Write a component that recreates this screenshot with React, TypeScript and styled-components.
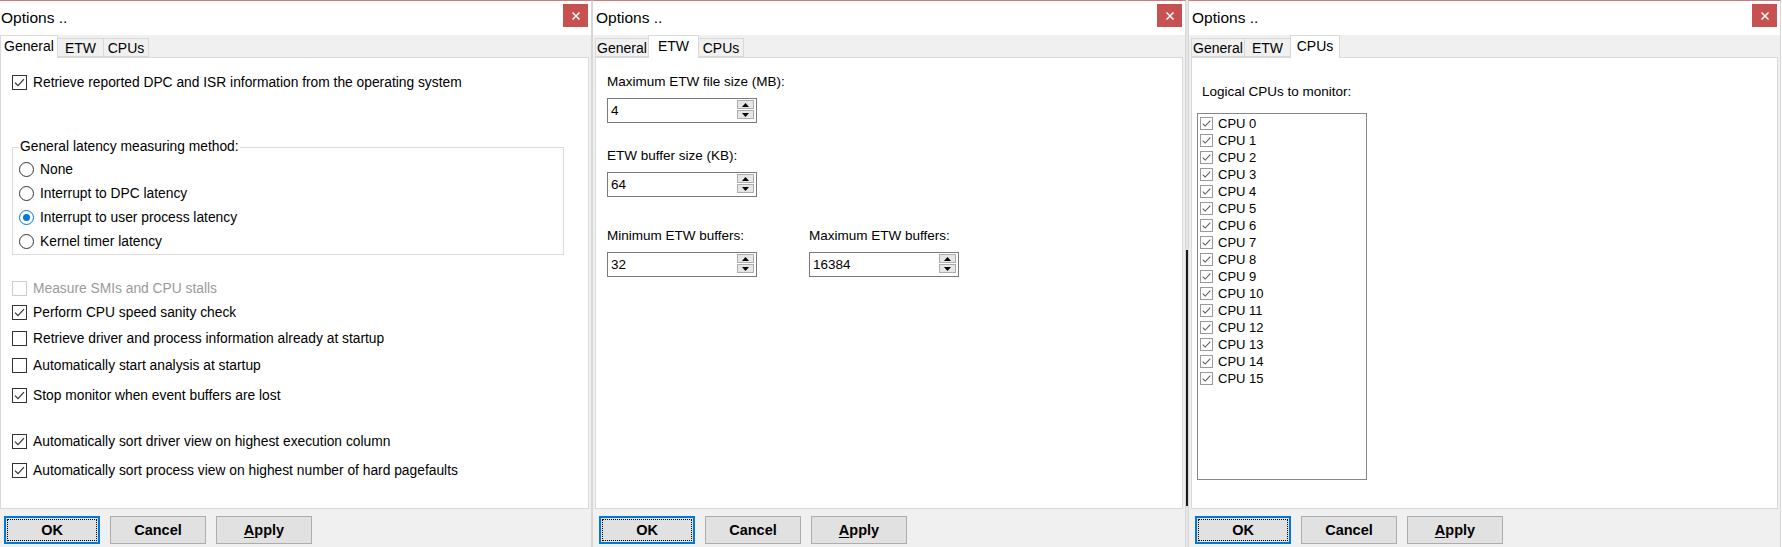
import React from 'react';
import styled, { createGlobalStyle } from 'styled-components';

const GlobalStyle = createGlobalStyle`
  html, body {
    margin: 0;
    padding: 0;
    background: #ffffff;
    overflow: hidden;
  }
  body {
    font-family: "Liberation Sans", Arial, sans-serif;
    font-size: 13.5px;
    color: #000000;
  }
  * {
    box-sizing: border-box;
  }
`;

// Layout
const Desktop = styled.div`
  display: flex;
  width: 1782px;
  height: 547px;
  overflow: hidden;
`;

const Window = styled.div<{ $shift?: number; $width?: number }>`
  flex: 0 0 ${({ $width }) => $width ?? 595}px;
  height: 547px;
  margin-left: ${({ $shift }) => $shift ?? 0}px;
  display: flex;
  flex-direction: column;
  background: #f0f0f0;
  border-top: 1px solid #cf7b7b;
  border-left: 1px solid #d6d6d6;
  border-right: 1px solid #d6d6d6;
`;

// dark edge of a window sitting behind the dialogs
const Seam = styled.div`
  flex: 0 0 2px;
  height: 547px;
  background: linear-gradient(
    to bottom,
    #e6e6e6 0,
    #e6e6e6 250px,
    #1c1c1c 250px,
    #1c1c1c 506px,
    #e6e6e6 506px
  );
`;

const TitleBar = styled.div`
  height: 34px;
  flex: 0 0 34px;
  background: #ffffff;
  display: flex;
  align-items: flex-start;
  justify-content: space-between;
  padding-left: 3px;
`;

const Title = styled.div`
  font-size: 15.5px;
  line-height: 34px;
`;

const CloseButton = styled.div`
  width: 25px;
  height: 23px;
  margin-top: 3px;
  margin-right: 3px;
  background: #c75050;
  display: flex;
  align-items: center;
  justify-content: center;
`;

const TabStrip = styled.div`
  height: 22px;
  flex: 0 0 22px;
  display: flex;
  align-items: flex-end;
  padding-left: 2px;
`;

const Tab = styled.div<{ $active?: boolean; $w: number }>`
  position: relative;
  z-index: ${({ $active }) => ($active ? 1 : 0)};
  width: ${({ $w, $active }) => $w + ($active ? 4 : 0)}px;
  height: ${({ $active }) => ($active ? 23 : 19)}px;
  margin-bottom: ${({ $active }) => ($active ? -1 : 0)}px;
  background: ${({ $active }) => ($active ? '#ffffff' : '#f0f0f0')};
  border: 1px solid #d9d9d9;
  border-bottom: ${({ $active }) => ($active ? 'none' : '1px solid #d9d9d9')};
  display: flex;
  align-items: center;
  justify-content: center;
  padding-bottom: ${({ $active }) => ($active ? 3 : 0)}px;
  font-size: 14px;

  & + & {
    margin-left: -1px;
  }
`;

const Panel = styled.div<{ $pad: string; $size?: number }>`
  flex: 1;
  margin: 0 2px;
  background: #ffffff;
  border: 1px solid #d9d9d9;
  padding: ${({ $pad }) => $pad};
  font-size: ${({ $size }) => $size ?? 13.5}px;
  display: flex;
  flex-direction: column;
  align-items: flex-start;
`;

const ButtonBar = styled.div`
  height: 38px;
  flex: 0 0 38px;
  display: flex;
  gap: 10px;
  padding: 7px 0 0 6px;
`;

const PushButton = styled.div<{ $default?: boolean }>`
  width: 96px;
  height: 28px;
  background: #e1e1e1;
  border: 1px solid ${({ $default }) => ($default ? '#0078d7' : '#adadad')};
  box-shadow: ${({ $default }) => ($default ? 'inset 0 0 0 1px #0078d7' : 'none')};
  outline: ${({ $default }) => ($default ? '1px dotted #000000' : 'none')};
  outline-offset: -4px;
  display: flex;
  align-items: center;
  justify-content: center;
  font-weight: 700;
  font-size: 14.5px;

  u {
    text-decoration-thickness: 1px;
    text-underline-offset: 2px;
  }
`;

// Check boxes and radio buttons
const CheckBox = styled.span<{ $size: number; $tone: 'normal' | 'disabled' | 'list' }>`
  flex: 0 0 auto;
  width: ${({ $size }) => $size}px;
  height: ${({ $size }) => $size}px;
  background: #ffffff;
  border: 1px solid
    ${({ $tone }) => ($tone === 'disabled' ? '#cccccc' : $tone === 'list' ? '#9a9a9a' : '#333333')};
  display: flex;
  align-items: center;
  justify-content: center;
`;

const RadioDot = styled.span<{ $on: boolean }>`
  flex: 0 0 auto;
  width: 15px;
  height: 15px;
  border-radius: 50%;
  background: #ffffff;
  border: 1px solid ${({ $on }) => ($on ? '#0078d7' : '#333333')};
  display: flex;
  align-items: center;
  justify-content: center;

  &::after {
    content: '';
    width: 7px;
    height: 7px;
    border-radius: 50%;
    background: ${({ $on }) => ($on ? '#0078d7' : 'transparent')};
  }
`;

const OptionRow = styled.div<{ $gap?: number; $disabled?: boolean }>`
  height: 24px;
  margin-top: ${({ $gap }) => $gap ?? 0}px;
  display: flex;
  align-items: center;
  gap: 6px;
  color: ${({ $disabled }) => ($disabled ? '#9b9b9b' : '#000000')};
  white-space: nowrap;
`;

const GroupBox = styled.fieldset`
  width: 552px;
  margin: 45px 0 0 0;
  padding: 2px 0 1px 6px;
  border: 1px solid #dcdcdc;

  legend {
    padding: 0 1px;
    line-height: 16px;
  }
`;

// ETW page
const FieldStack = styled.div`
  display: flex;
  flex-direction: column;
`;

const FieldLine = styled.div<{ $gap: number }>`
  display: flex;
  gap: 52px;
  margin-top: ${({ $gap }) => $gap}px;
`;

const FieldLabel = styled.div`
  line-height: 16px;
  margin-bottom: 8px;
  white-space: nowrap;
`;

const SpinBox = styled.div`
  width: 150px;
  height: 25px;
  border: 1px solid #7a7a7a;
  background: #ffffff;
  display: flex;
  align-items: flex-start;
  justify-content: space-between;
  padding: 0 2px 0 3px;
`;

const SpinValue = styled.span`
  line-height: 23px;
`;

const SpinArrows = styled.div`
  display: flex;
  flex-direction: column;
  gap: 1px;
  padding-top: 1px;
`;

const SpinArrow = styled.div`
  width: 17px;
  height: 9px;
  background: #e6e6e6;
  border: 1px solid #adadad;
  display: flex;
  align-items: center;
  justify-content: center;
`;

// CPUs page
const ListCaption = styled.div`
  line-height: 16px;
  margin-left: 5px;
`;

const ListBox = styled.div`
  width: 170px;
  height: 367px;
  margin-top: 13px;
  border: 1px solid #828790;
  padding: 1px 0 0 2px;
`;

const ListItem = styled.div`
  height: 17px;
  display: flex;
  align-items: center;
  gap: 5px;
  font-size: 13px;
  white-space: nowrap;
`;

const CheckMark: React.FC<{ size: number; color: string }> = ({ size, color }) => (
  <svg width={size} height={size} viewBox="0 0 13 13">
    <polyline points="2,6.6 5,9.6 11,3.2" fill="none" stroke={color} strokeWidth="1.2" />
  </svg>
);

const Check: React.FC<{ checked: boolean; size?: number; tone?: 'normal' | 'disabled' | 'list' }> = ({
  checked,
  size = 15,
  tone = 'normal',
}) => (
  <CheckBox $size={size} $tone={tone}>
    {checked && <CheckMark size={size - 2} color={tone === 'list' ? '#555555' : '#333333'} />}
  </CheckBox>
);

const Arrow: React.FC<{ up?: boolean }> = ({ up }) => (
  <svg width="7" height="4" viewBox="0 0 7 4">
    <polygon points={up ? '0,4 7,4 3.5,0' : '0,0 7,0 3.5,4'} fill="#000000" />
  </svg>
);

const Spinner: React.FC<{ label: string; value: string }> = ({ label, value }) => (
  <FieldStack>
    <FieldLabel>{label}</FieldLabel>
    <SpinBox>
      <SpinValue>{value}</SpinValue>
      <SpinArrows>
        <SpinArrow>
          <Arrow up />
        </SpinArrow>
        <SpinArrow>
          <Arrow />
        </SpinArrow>
      </SpinArrows>
    </SpinBox>
  </FieldStack>
);

type Page = 'General' | 'ETW' | 'CPUs';

const tabWidths: Record<Page, number> = { General: 54, ETW: 47, CPUs: 46 };

const OptionsWindow: React.FC<{
  page: Page;
  shift?: number;
  width?: number;
  pad: string;
  size?: number;
  children: React.ReactNode;
}> = ({ page, shift, width, pad, size, children }) => (
  <Window $shift={shift} $width={width}>
    <TitleBar>
      <Title>Options ..</Title>
      <CloseButton>
        <svg width="8" height="8" viewBox="0 0 8 8">
          <path d="M0.5 0.5 L7.5 7.5 M7.5 0.5 L0.5 7.5" stroke="#ffffff" strokeWidth="1.5" />
        </svg>
      </CloseButton>
    </TitleBar>
    <TabStrip>
      {(Object.keys(tabWidths) as Page[]).map(name => (
        <Tab key={name} $w={tabWidths[name]} $active={name === page}>
          {name}
        </Tab>
      ))}
    </TabStrip>
    <Panel $pad={pad} $size={size}>
      {children}
    </Panel>
    <ButtonBar>
      <PushButton $default>OK</PushButton>
      <PushButton>Cancel</PushButton>
      <PushButton>
        <span>
          <u>A</u>pply
        </span>
      </PushButton>
    </ButtonBar>
  </Window>
);

const latencyMethods = [
  { label: 'None', on: false },
  { label: 'Interrupt to DPC latency', on: false },
  { label: 'Interrupt to user process latency', on: true },
  { label: 'Kernel timer latency', on: false },
];

const generalOptions = [
  { label: 'Measure SMIs and CPU stalls', checked: false, disabled: true, gap: 21 },
  { label: 'Perform CPU speed sanity check', checked: true, gap: 0 },
  { label: 'Retrieve driver and process information already at startup', checked: false, gap: 2 },
  { label: 'Automatically start analysis at startup', checked: false, gap: 3 },
  { label: 'Stop monitor when event buffers are lost', checked: true, gap: 6 },
  { label: 'Automatically sort driver view on highest execution column', checked: true, gap: 22 },
  { label: 'Automatically sort process view on highest number of hard pagefaults', checked: true, gap: 5 },
];

const cpus = Array.from({ length: 16 }, (_, i) => `CPU ${i}`);

export default function App() {
  return (
    <>
      <GlobalStyle />
      <Desktop>
        <OptionsWindow page="General" shift={-3} pad="12px 0 0 11px" size={13.8}>
          <OptionRow>
            <Check checked />
            Retrieve reported DPC and ISR information from the operating system
          </OptionRow>
          <GroupBox>
            <legend>General latency measuring method:</legend>
            {latencyMethods.map(m => (
              <OptionRow key={m.label}>
                <RadioDot $on={m.on} />
                {m.label}
              </OptionRow>
            ))}
          </GroupBox>
          {generalOptions.map(o => (
            <OptionRow key={o.label} $gap={o.gap} $disabled={o.disabled}>
              <Check checked={o.checked} tone={o.disabled ? 'disabled' : 'normal'} />
              {o.label}
            </OptionRow>
          ))}
        </OptionsWindow>

        <OptionsWindow page="ETW" pad="16px 0 0 11px" width={594}>
          <FieldLine $gap={0}>
            <Spinner label="Maximum ETW file size (MB):" value="4" />
          </FieldLine>
          <FieldLine $gap={25}>
            <Spinner label="ETW buffer size (KB):" value="64" />
          </FieldLine>
          <FieldLine $gap={31}>
            <Spinner label="Minimum ETW buffers:" value="32" />
            <Spinner label="Maximum ETW buffers:" value="16384" />
          </FieldLine>
        </OptionsWindow>

        <Seam />

        <OptionsWindow page="CPUs" pad="26px 0 0 5px" width={593}>
          <ListCaption>Logical CPUs to monitor:</ListCaption>
          <ListBox>
            {cpus.map(cpu => (
              <ListItem key={cpu}>
                <Check checked size={13} tone="list" />
                {cpu}
              </ListItem>
            ))}
          </ListBox>
        </OptionsWindow>
      </Desktop>
    </>
  );
}
